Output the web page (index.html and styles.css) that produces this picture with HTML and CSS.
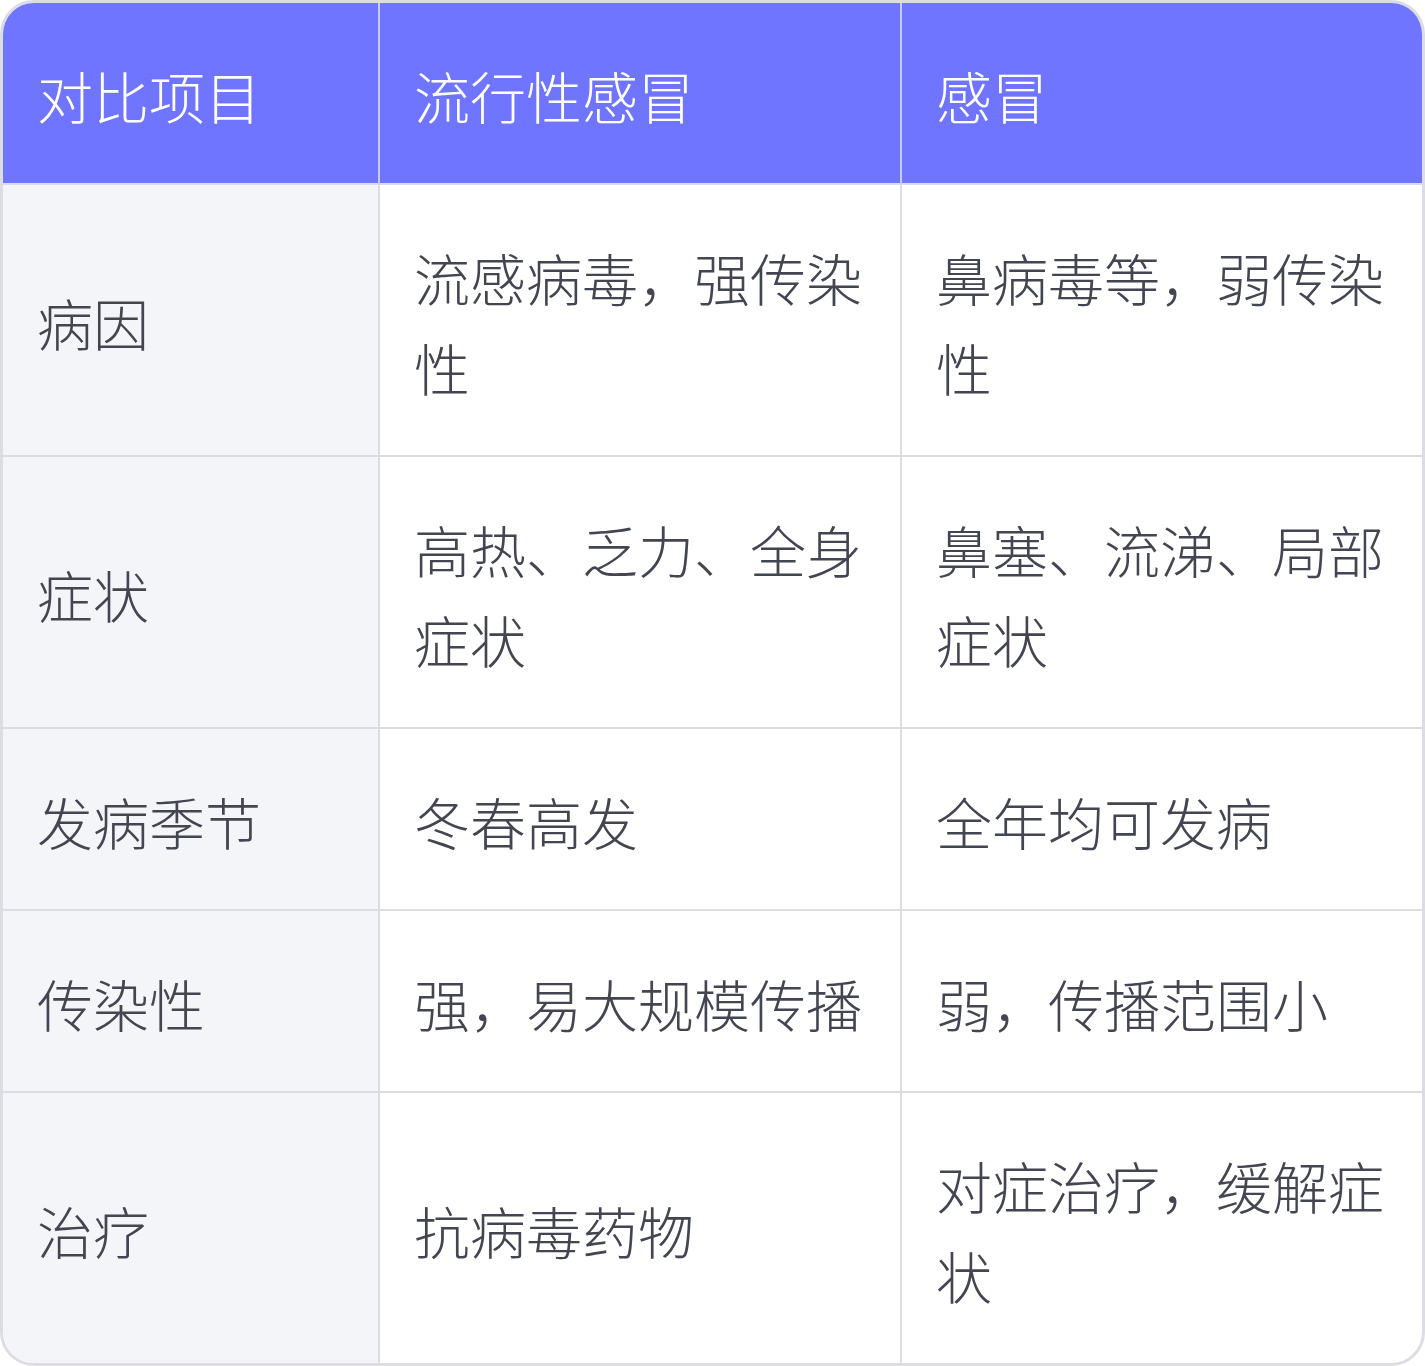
FILE: index.html
```html
<!DOCTYPE html>
<html lang="zh-CN">
<head>
<meta charset="utf-8">
<link rel="stylesheet" href="styles.css">
</head>
<body>
<table class="cmp">
  <colgroup>
    <col class="c1"><col class="c2"><col class="c3">
  </colgroup>
  <thead>
    <tr><th>对比项目</th><th>流行性感冒</th><th>感冒</th></tr>
  </thead>
  <tbody>
    <tr><td>病因</td><td>流感病毒，强传染性</td><td>鼻病毒等，弱传染性</td></tr>
    <tr><td>症状</td><td>高热、乏力、全身症状</td><td>鼻塞、流涕、局部症状</td></tr>
    <tr><td>发病季节</td><td>冬春高发</td><td>全年均可发病</td></tr>
    <tr><td>传染性</td><td>强，易大规模传播</td><td>弱，传播范围小</td></tr>
    <tr><td>治疗</td><td>抗病毒药物</td><td>对症治疗，缓解症状</td></tr>
  </tbody>
</table>
</body>
</html>
```

FILE: styles.css
```css
html, body {
  margin: 0;
  padding: 0;
  background: #ffffff;
}
.cmp {
  width: 1425px;
  table-layout: fixed;
  border-collapse: separate;
  border-spacing: 0;
  border: 3px solid #dcdce2;
  border-radius: 34px;
  overflow: hidden;
  font-family: "Noto Sans CJK SC", "Noto Sans", sans-serif;
  font-size: 56px;
  line-height: 90px;
  color: #434550;
}
.c1 { width: 377px; }
.c2 { width: 522px; }
.c3 { width: 520px; }
.cmp th,
.cmp td {
  box-sizing: border-box;
  padding: 47px 34px 43px 34px;
  text-align: left;
  vertical-align: middle;
  font-weight: 300;
  border-right: 2px solid #dcdce2;
  border-bottom: 2px solid #dcdce2;
}
.cmp th:last-child,
.cmp td:last-child {
  border-right: none;
}
.cmp tbody tr:last-child td {
  border-bottom: none;
}
.cmp th {
  background: #6f75ff;
  color: #ffffff;
  border-right-color: #c8cbf4;
}
.cmp td:first-child {
  background: #f4f5f9;
}
```
